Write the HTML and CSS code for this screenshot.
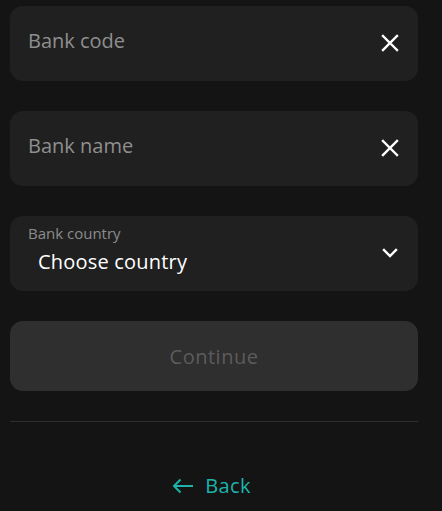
FILE: index.html
```html
<!DOCTYPE html>
<html>
<head>
<meta charset="utf-8">
<link rel="stylesheet" href="styles.css">
</head>
<body>
<div class="page">
  <div class="field">
    <span class="placeholder">Bank code</span>
    <svg class="icon-x" width="18" height="18" viewBox="0 0 18 18"><path d="M2 2 L16 16 M16 2 L2 16" stroke="#fff" stroke-width="2.4" stroke-linecap="square" fill="none"/></svg>
  </div>
  <div class="field">
    <span class="placeholder">Bank name</span>
    <svg class="icon-x" width="18" height="18" viewBox="0 0 18 18"><path d="M2 2 L16 16 M16 2 L2 16" stroke="#fff" stroke-width="2.4" stroke-linecap="square" fill="none"/></svg>
  </div>
  <div class="field select">
    <div class="select-text">
      <span class="label">Bank country</span>
      <span class="value">Choose country</span>
    </div>
    <svg class="icon-chev" width="16" height="10" viewBox="0 0 16 10"><path d="M2 2 L8 8 L14 2" stroke="#fff" stroke-width="2.4" stroke-linecap="square" fill="none"/></svg>
  </div>
  <button class="continue">Continue</button>
  <hr class="divider">
  <a class="back">
    <svg width="22" height="16" viewBox="0 0 22 16"><path d="M21 8 H2 M8.5 1.5 L2 8 L8.5 14.5" stroke="#1cb3ab" stroke-width="2" fill="none"/></svg>
    <span>Back</span>
  </a>
</div>
</body>
</html>
```
FILE: styles.css
```css
html, body {
  margin: 0;
  padding: 0;
  background: #141414;
}
body {
  font-family: "Open Sans", "Noto Sans", sans-serif;
}
.page {
  width: 408px;
  padding: 6px 10px 0;
  display: flex;
  flex-direction: column;
}
.field {
  height: 75px;
  box-sizing: border-box;
  background: #202020;
  border-radius: 13px;
  margin-bottom: 30px;
  display: flex;
  align-items: flex-start;
  justify-content: space-between;
  padding: 21px 19px 0 18px;
}
.placeholder {
  font-size: 20px;
  line-height: 27px;
  color: #8f8f8f;
}
.icon-x {
  margin-top: 7px;
}
.select {
  padding-top: 7px;
}
.select-text {
  display: flex;
  flex-direction: column;
}
.label {
  font-size: 15px;
  line-height: 20px;
  color: #8c8c8c;
}
.value {
  font-size: 20px;
  line-height: 27px;
  color: #ffffff;
  margin-left: 10px;
  margin-top: 5px;
  letter-spacing: 0.2px;
}
.icon-chev {
  margin-top: 25px;
  margin-right: 1px;
}
.continue {
  height: 70px;
  border: none;
  border-radius: 13px;
  background: #2f2f2f;
  color: #5c5c5c;
  font-family: "Open Sans", "Noto Sans", sans-serif;
  font-size: 20px;
  letter-spacing: 0.5px;
  padding: 0;
  margin: 0;
}
.divider {
  border: none;
  height: 1px;
  background: #2e2e2e;
  margin: 30px 0 0;
}
.back {
  display: flex;
  align-items: center;
  justify-content: center;
  gap: 11px;
  margin-top: 51px;
  color: #1cb3ab;
  font-size: 20px;
  line-height: 26px;
  letter-spacing: 0.4px;
  padding-right: 5px;
}
```
